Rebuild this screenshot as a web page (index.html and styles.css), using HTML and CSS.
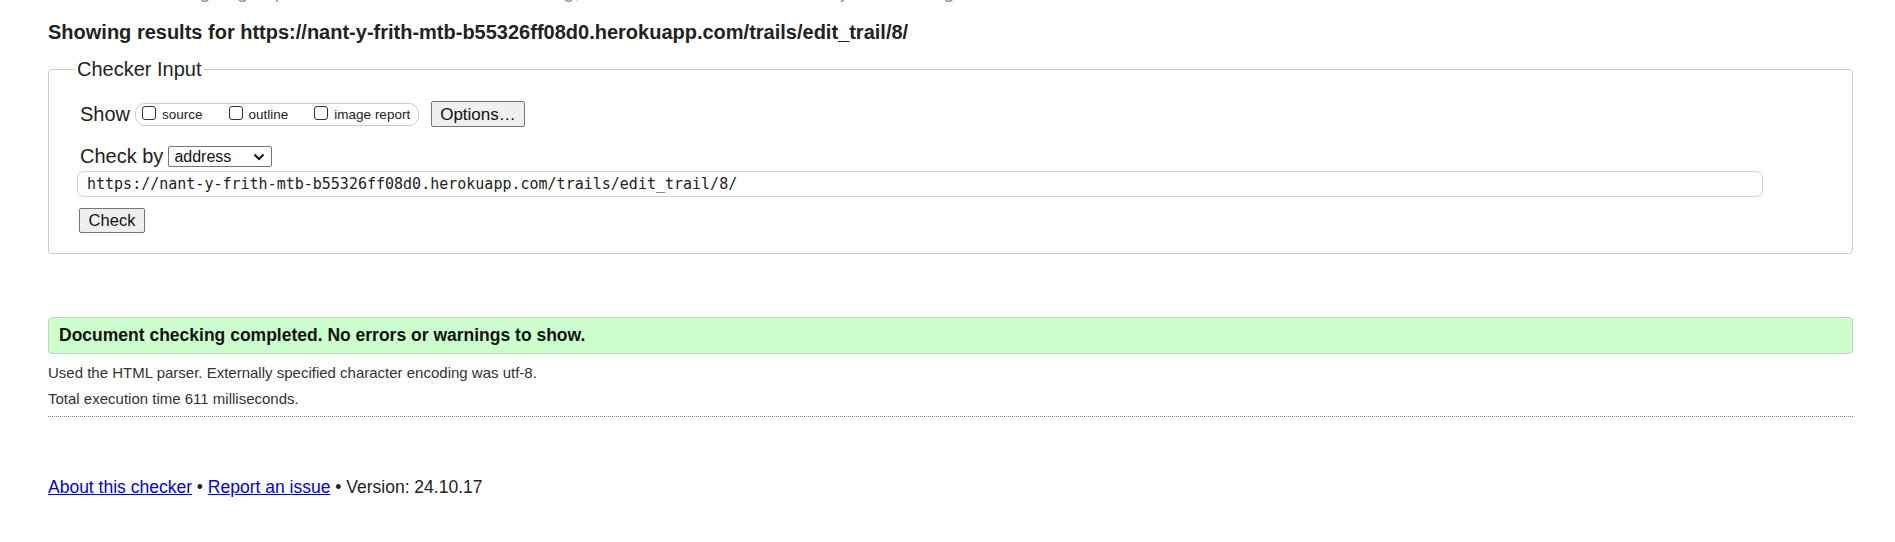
FILE: index.html
```html
<!DOCTYPE html>
<html lang="en">
<head>
<meta charset="utf-8">
<title>Nu Html Checker</title>
<link rel="stylesheet" href="styles.css">
</head>
<body>
<p class="intro">This tool is an ongoing experiment in better HTML checking, and its behavior remains subject to change</p>
<h2 class="results">Showing results for https://nant-y-frith-mtb-b55326ff08d0.herokuapp.com/trails/edit_trail/8/</h2>
<form class="checker">
  <fieldset class="checker-fieldset">
    <legend class="checker-legend">Checker Input</legend>
    <div class="show-row">
      <span class="label">Show</span>
      <span class="show-group">
        <label class="opt"><input type="checkbox" class="cb"><span>source</span></label>
        <label class="opt"><input type="checkbox" class="cb"><span>outline</span></label>
        <label class="opt"><input type="checkbox" class="cb"><span>image report</span></label>
      </span>
      <button type="button" class="btn">Options…</button>
    </div>
    <div class="checkby-row">
      <span class="label">Check by</span>
      <span class="select">address<svg class="chev" width="12" height="8" viewBox="0 0 12 8"><path d="M1.5 1.5 L6 6 L10.5 1.5" fill="none" stroke="#111" stroke-width="2"/></svg></span>
    </div>
    <div class="url">https://nant-y-frith-mtb-b55326ff08d0.herokuapp.com/trails/edit_trail/8/</div>
    <div class="submit-row"><button type="button" class="btn">Check</button></div>
  </fieldset>
</form>
<p class="success">Document checking completed. No errors or warnings to show.</p>
<p class="details">Used the HTML parser. Externally specified character encoding was utf-8.</p>
<p class="details">Total execution time 611 milliseconds.</p>
<hr class="rule">
<p class="footer"><a href="#">About this checker</a> • <a href="#">Report an issue</a> • Version: 24.10.17</p>
</body>
</html>
```
FILE: styles.css
```css
html, body { margin: 0; padding: 0; background: #fff; }
body {
  padding: 0 42px 0 48px;
  font-family: "Liberation Sans", Arial, sans-serif;
  font-size: 18px;
  color: #222;
  overflow: hidden;
}
.intro {
  margin: -21px 0 0 0;
  line-height: 24px;
  font-size: 20px;
  color: #999;
}
.results {
  margin: 17px 0 0 0;
  font-size: 20px;
  line-height: 24px;
  font-weight: bold;
  color: #222;
}
.checker { margin: 14px 0 0 0; }
.checker-fieldset {
  margin: 0;
  border: 1px solid #ccc;
  border-radius: 4px;
  padding: 0 28px 20px 28px;
}
.checker-legend {
  margin-left: -2px;
  padding: 0 2px;
  font-size: 20px;
  line-height: 23px;
  color: #222;
}
.show-row {
  display: flex;
  align-items: center;
  margin-top: 20px;
  height: 26px;
}
.label { font-size: 20px; line-height: 23px; padding-left: 3px; }
.show-group {
  display: inline-flex;
  align-items: center;
  gap: 26px;
  margin-left: 5px;
  height: 23px;
  padding: 0 8px 0 6px;
  border: 1px solid #ccc;
  border-radius: 10px;
  box-sizing: border-box;
}
.opt {
  display: inline-flex;
  align-items: flex-end;
  font-size: 13.5px;
  line-height: 16px;
  color: #222;
}
.cb {
  width: 14px;
  height: 14px;
  margin: 0 6px 3px 0;
  appearance: none;
  border: 1px solid #333;
  border-radius: 3px;
  background: #fff;
}
.btn {
  font-family: "Liberation Sans", Arial, sans-serif;
  font-size: 16.5px;
  color: #111;
  background: #efefef;
  border: 1px solid #767676;
  border-radius: 2px;
  padding: 0 7px;
  height: 25px;
  line-height: 23px;
}
.show-row .btn { margin-left: 12px; height: 26px; padding: 0 8px; font-size: 17px; }
.checkby-row {
  display: flex;
  align-items: center;
  margin-top: 18px;
  height: 23px;
}
.select {
  display: inline-flex;
  align-items: center;
  justify-content: space-between;
  box-sizing: border-box;
  width: 104px;
  height: 21px;
  margin-left: 5px;
  padding: 0 6px 0 5px;
  border: 1px solid #767676;
  border-radius: 2px;
  font-size: 16px;
  color: #111;
}
.url {
  margin-top: 3px;
  box-sizing: border-box;
  width: 1686px;
  height: 26px;
  padding: 0 9px;
  border: 1px solid #d0d0d0;
  border-radius: 6px;
  font-family: "DejaVu Sans Mono", "Liberation Mono", monospace;
  font-size: 15px;
  line-height: 24px;
  color: #222;
}
.submit-row { margin-top: 11px; display: flex; padding-left: 2px; }
.submit-row .btn { width: 66px; padding: 0; }
.success {
  margin: 63px 0 0 0;
  padding: 0 10px;
  height: 37px;
  box-sizing: border-box;
  line-height: 35px;
  background: #cfc;
  border: 1px solid #ccc;
  border-radius: 4px;
  font-weight: bold;
  font-size: 17.5px;
  color: #111;
}
.details {
  margin: 9px 0 0 0;
  font-size: 15px;
  line-height: 19px;
  color: #333;
}
.details + .details { margin-top: 7px; }
.rule {
  margin: 8px 0 0 0;
  border: 0;
  border-top: 1px dotted #888;
  height: 0;
}
.footer {
  margin: 58px 0 0 0;
  font-size: 17.5px;
  line-height: 24px;
  color: #222;
}
.footer a { color: #00e; text-decoration: underline; }
```
